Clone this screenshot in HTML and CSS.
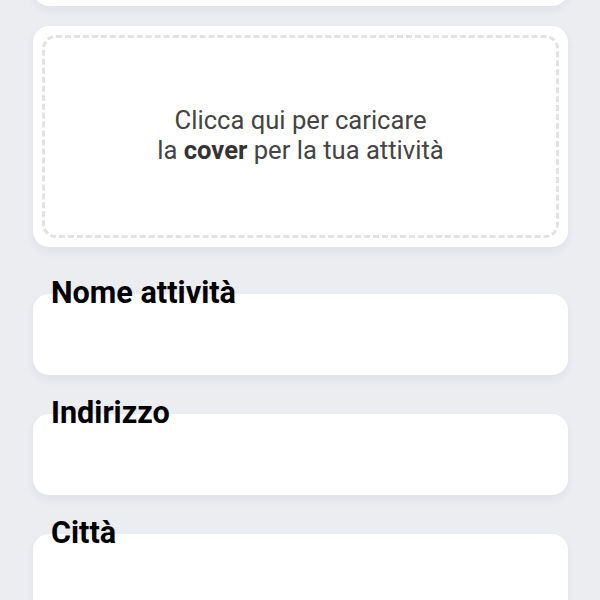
FILE: index.html
```html
<!DOCTYPE html>
<html lang="it">
<head>
<meta charset="utf-8">
<title>Attività</title>
<link rel="stylesheet" href="styles.css">
</head>
<body>
<main class="page">
  <div class="card card-top"></div>
  <div class="card card-cover">
    <div class="dropzone">
      <p class="drop-text">Clicca qui per caricare<br>la <strong>cover</strong> per la tua attività</p>
    </div>
  </div>
  <div class="field field-first">
    <label class="field-label">Nome attività</label>
    <div class="card field-input"></div>
  </div>
  <div class="field">
    <label class="field-label">Indirizzo</label>
    <div class="card field-input"></div>
  </div>
  <div class="field">
    <label class="field-label">Città</label>
    <div class="card field-input"></div>
  </div>
</main>
</body>
</html>
```
FILE: styles.css
```css
html, body {
  margin: 0;
  padding: 0;
  background: #ebedf1;
  height: 600px;
  overflow: hidden;
}
.page {
  padding: 0 32px 0 33px;
  font-family: Roboto, "Noto Sans", sans-serif;
  display: flex;
  flex-direction: column;
}
.card {
  background: #ffffff;
  border-radius: 16px;
  box-shadow: 0 4px 10px rgba(30, 40, 70, 0.06);
}
.card-top {
  height: 60px;
  margin-top: -54px;
}
.card-cover {
  margin-top: 20px;
  height: 221px;
  padding: 9px;
  box-sizing: border-box;
}
.dropzone {
  height: 100%;
  box-sizing: border-box;
  border: 3px dashed #e2e2e4;
  border-radius: 14px;
  display: flex;
  align-items: center;
  justify-content: center;
}
.drop-text {
  margin: 0;
  text-align: center;
  font-size: 25.6px;
  line-height: 30px;
  color: #444444;
  padding-bottom: 4px;
}
.drop-text strong {
  color: #333333;
  font-weight: 700;
}
.field {
  display: flex;
  flex-direction: column;
  margin-top: 23px;
}
.field-first {
  margin-top: 31px;
}
.field-label {
  position: relative;
  z-index: 1;
  font-size: 30.6px;
  line-height: 30px;
  font-weight: 700;
  color: #000000;
  padding-left: 18px;
  margin-bottom: -14px;
}
.field-input {
  height: 81px;
}
```
